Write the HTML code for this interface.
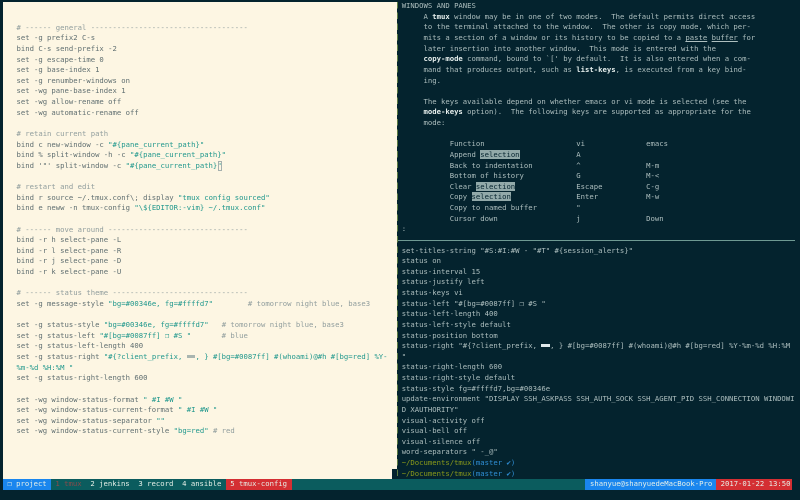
<!DOCTYPE html>
<html><head><meta charset="utf-8">
<style>
html,body{margin:0;padding:0;width:800px;height:500px;overflow:hidden;background:#04232e}
*{box-sizing:border-box}
.a{position:absolute}
pre{margin:0;position:absolute;font-family:"DejaVu Sans Mono","Liberation Mono",monospace;font-size:7.26px;line-height:10.63px;white-space:pre;filter:blur(.3px)}
#l{left:16.5px;top:22.7px;color:#5f6e70}
#l i{font-style:normal;color:#1f978c}
#l u{text-decoration:none;color:#909d9d}
#r{left:401.7px;top:1.2px;color:#aebfbf}
#r b{color:#e8f0ee;font-weight:bold}
#r s{text-decoration:none;background:#92a9a9;color:#04232e}
#r u{text-decoration:underline}
#r em{font-style:normal;color:#8a9a1a}
#r q{quotes:none;color:#2f8fd6}
.g{display:inline-block;width:4.37px;text-align:center}
.k{display:inline-block;width:8.74px;height:3px;background:currentColor;vertical-align:1px}
#s{left:3px;top:479px;width:789px;height:11px;background:#0b5c5e}
.t{top:479px;height:11px;line-height:10.6px;color:#e6f0e8}
</style></head><body>
<div class="a" style="left:3px;top:2px;width:393.5px;height:467px;background:#fdf6e3"></div>
<div class="a" style="left:3px;top:469px;width:389px;height:10px;background:#fdf6e3"></div>
<div class="a" style="left:397px;top:2px;width:1.2px;height:474px;background:repeating-linear-gradient(#5f7d42 0,#5f7d42 6.5px,#04232e 6.5px,#04232e 10.63px)"></div>
<div class="a" style="left:398px;top:240px;width:397px;height:1px;background:#6f9a93"></div>
<pre id="l"><u># ------ general ------------------------------------</u>
set -g prefix2 C-s
bind C-s send-prefix -2
set -g escape-time 0
set -g base-index 1
set -g renumber-windows on
set -wg pane-base-index 1
set -wg allow-rename off
set -wg automatic-rename off

<u># retain current path</u>
bind c new-window -c <i>"#{pane_current_path}"</i>
bind % split-window -h -c <i>"#{pane_current_path}"</i>
bind '"' split-window -c <i>"#{pane_current_path}"</i>

<u># restart and edit</u>
bind r source ~/.tmux.conf\; display <i>"tmux config sourced"</i>
bind e neww -n tmux-config <i>"\${EDITOR:-vim} ~/.tmux.conf"</i>

<u># ------ move around --------------------------------</u>
bind -r h select-pane -L
bind -r l select-pane -R
bind -r j select-pane -D
bind -r k select-pane -U

<u># ------ status theme -------------------------------</u>
set -g message-style <i>"bg=#00346e, fg=#ffffd7"</i>        <u># tomorrow night blue, base3</u>

set -g status-style <i>"bg=#00346e, fg=#ffffd7"</i>   <u># tomorrow night blue, base3</u>
set -g status-left <i>"#[bg=#0087ff] <span class="g">❐</span> #S "</i>       <u># blue</u>
set -g status-left-length 400
set -g status-right <i>"#{?client_prefix, <span class="k" style="color:#a9b5b0"></span>, } #[bg=#0087ff] #(whoami)@#h #[bg=red] %Y-</i>
<i>%m-%d %H:%M "</i>
set -g status-right-length 600

set -wg window-status-format <i>" #I #W "</i>
set -wg window-status-current-format <i>" #I #W "</i>
set -wg window-status-separator <i>""</i>
set -wg window-status-current-style <i>"bg=red"</i> <u># red</u></pre>
<div class="a" style="left:217.5px;top:161px;width:4.5px;height:10px;border:1px solid #a5b0ae"></div>
<pre id="r">WINDOWS AND PANES
     A <b>tmux</b> window may be in one of two modes.  The default permits direct access
     to the terminal attached to the window.  The other is copy mode, which per-
     mits a section of a window or its history to be copied to a <u>paste</u> <u>buffer</u> for
     later insertion into another window.  This mode is entered with the
     <b>copy-mode</b> command, bound to `[' by default.  It is also entered when a com-
     mand that produces output, such as <b>list-keys</b>, is executed from a key bind-
     ing.

     The keys available depend on whether emacs or vi mode is selected (see the
     <b>mode-keys</b> option).  The following keys are supported as appropriate for the
     mode:

           Function                     vi              emacs
           Append <s>selection</s>             A
           Back to indentation          ^               M-m
           Bottom of history            G               M-&lt;
           Clear <s>selection</s>              Escape          C-g
           Copy <s>selection</s>               Enter           M-w
           Copy to named buffer         "
           Cursor down                  j               Down
:

set-titles-string "#S:#I:#W - "#T" #{session_alerts}"
status on
status-interval 15
status-justify left
status-keys vi
status-left "#[bg=#0087ff] <span class="g">❐</span> #S "
status-left-length 400
status-left-style default
status-position bottom
status-right "#{?client_prefix, <span class="k" style="color:#dfe8ea"></span>, } #[bg=#0087ff] #(whoami)@#h #[bg=red] %Y-%m-%d %H:%M
"
status-right-length 600
status-right-style default
status-style fg=#ffffd7,bg=#00346e
update-environment "DISPLAY SSH_ASKPASS SSH_AUTH_SOCK SSH_AGENT_PID SSH_CONNECTION WINDOWI
D XAUTHORITY"
visual-activity off
visual-bell off
visual-silence off
word-separators " -_@"
<em>~/Documents/tmux</em><q>(master <span class="g">✔</span>)</q>
<em>~/Documents/tmux</em><q>(master <span class="g">✔</span>)</q></pre>
<div class="a" id="s"></div>
<div class="a" style="left:3px;top:479px;width:48px;height:11px;background:#1a86ee"></div>
<div class="a" style="left:226px;top:479px;width:66px;height:11px;background:#d42f33"></div>
<div class="a" style="left:585px;top:479px;width:131px;height:11px;background:#1a86ee"></div>
<div class="a" style="left:716px;top:479px;width:76px;height:11px;background:#d42f33"></div>
<pre class="t" style="left:7.4px"><span class="g">❐</span> project</pre>
<pre class="t" style="left:55.4px;color:#8a4a4a">1 tmux</pre>
<pre class="t" style="left:90.4px">2 jenkins</pre>
<pre class="t" style="left:138.4px">3 record</pre>
<pre class="t" style="left:182.1px">4 ansible</pre>
<pre class="t" style="left:230.3px">5 tmux-config</pre>
<pre class="t" style="left:590px">shanyue@shanyuedeMacBook-Pro</pre>
<pre class="t" style="left:720.6px">2017-01-22 13:50</pre>
</body></html>
